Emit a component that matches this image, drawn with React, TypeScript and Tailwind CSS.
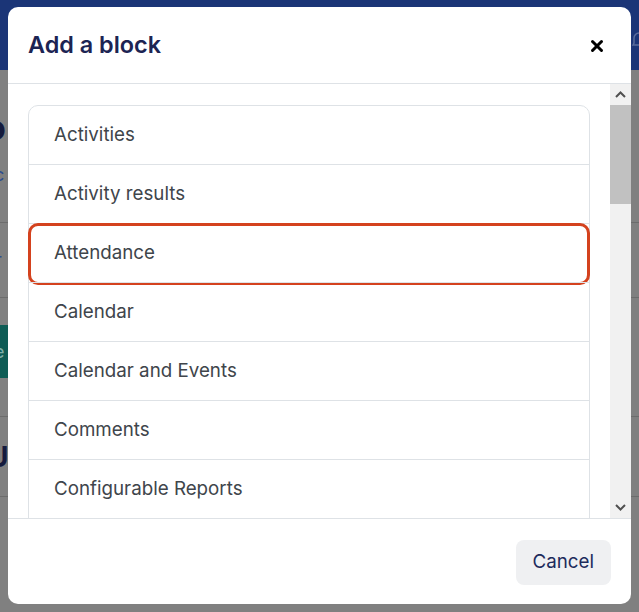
import { X } from 'lucide-react'

const BLOCKS = [
  'Activities',
  'Activity results',
  'Attendance',
  'Calendar',
  'Calendar and Events',
  'Comments',
  'Configurable Reports',
  'Course completion status',
]

function Scrollbar() {
  return (
    <div className="w-[21px] shrink-0 bg-[#f1f1f1] flex flex-col">
      <div className="h-[21px] flex items-center justify-center">
        <svg width="11" height="7" viewBox="0 0 11 7">
          <path d="M1 6 L5.5 1.5 L10 6" fill="none" stroke="#505050" strokeWidth="2" />
        </svg>
      </div>
      <div className="h-[99px] bg-[#c1c1c1]" />
      <div className="flex-1" />
      <div className="h-[21px] flex items-center justify-center">
        <svg width="11" height="7" viewBox="0 0 11 7">
          <path d="M1 1 L5.5 5.5 L10 1" fill="none" stroke="#505050" strokeWidth="2" />
        </svg>
      </div>
    </div>
  )
}

// the Moodle page behind the backdrop, already dimmed
function BackgroundPage() {
  return (
    <div className="absolute inset-0 bg-[#808080] flex flex-col">
      <div className="h-[70px] shrink-0 bg-[#1b3577] flex items-start justify-end">
        <svg className="mt-[30px] mr-[-8px]" width="16" height="20" viewBox="0 0 16 20">
          <path d="M2 15 L3 13 V8 a5 5 0 0 1 10 0 V13 L14 15 Z" fill="none" stroke="#5a6c9c" strokeWidth="1.5" />
        </svg>
      </div>
      <div className="h-[152px] shrink-0 flex flex-col">
        <span className="ml-[-15px] mt-[41px] text-[34px] leading-[34px] font-bold text-[#141a3d]">o</span>
        <span className="ml-[-6px] mt-[20px] text-[18px] leading-[20px] text-[#2f4d8f]">c</span>
      </div>
      <div className="h-[75px] shrink-0 border-t border-[#6c6c6c] flex items-center">
        <span className="ml-[-5px] text-[18px] leading-none text-[#2f4d8f]">r</span>
      </div>
      <div className="h-[119px] shrink-0 border-t border-[#6c6c6c] pt-[27px]">
        <div className="w-[8px] h-[53px] bg-[#0e5c55] flex items-center overflow-hidden">
          <span className="ml-[-6px] text-[18px] leading-none text-[#7fb0aa]">e</span>
        </div>
      </div>
      <div className="h-[80px] shrink-0 border-t border-[#6c6c6c] flex items-center">
        <span className="ml-[-12px] text-[28px] leading-none font-bold text-[#141a3d]">U</span>
      </div>
      <div className="border-t border-[#6c6c6c]" />
    </div>
  )
}

export default function App() {
  return (
    <div className="relative w-[639px] h-[612px] overflow-hidden font-['Inter',sans-serif]">
      <BackgroundPage />

      <div className="absolute left-[8px] top-[7px] w-[623px] h-[597px] bg-white rounded-[10px] flex flex-col overflow-hidden">
        <div className="h-[77px] shrink-0 px-[20px] flex items-center justify-between border-b border-[#dee2e6]">
          <h5 className="text-[23.4px] font-semibold text-[#1c2453] leading-none">Add a block</h5>
          <button className="w-[20px] h-[20px] flex items-center justify-center mr-[4px] mt-[2px]">
            <X className="w-[18px] h-[18px] text-black" strokeWidth={4} />
          </button>
        </div>

        <div className="flex-1 min-h-0 flex border-b border-[#dee2e6]">
          <div className="flex-1 overflow-hidden pt-[21px] pl-[20px] pr-[20px]">
            <div className="border border-[#dee2e6] rounded-t-[10px] flex flex-col">
              {BLOCKS.map((name, i) => (
                <div
                  key={name}
                  className={`relative px-[25px] py-[15px] text-[18.75px] leading-[28px] text-[#40454b] ${
                    i > 0 ? 'border-t border-[#dee2e6]' : ''
                  }`}
                >
                  {name}
                  {name === 'Attendance' && (
                    <div className="absolute left-[-1px] right-[-1px] top-[-1px] h-[62px] border-[3px] border-[#d4421e] rounded-[10px]" />
                  )}
                </div>
              ))}
            </div>
          </div>
          <Scrollbar />
        </div>

        <div className="h-[85px] shrink-0 flex items-center justify-end px-[20px] pt-[1px]">
          <button className="h-[45px] px-[17px] rounded-[8px] bg-[#eff0f2] text-[18.75px] text-[#1d2b5c]">
            Cancel
          </button>
        </div>
      </div>
    </div>
  )
}
